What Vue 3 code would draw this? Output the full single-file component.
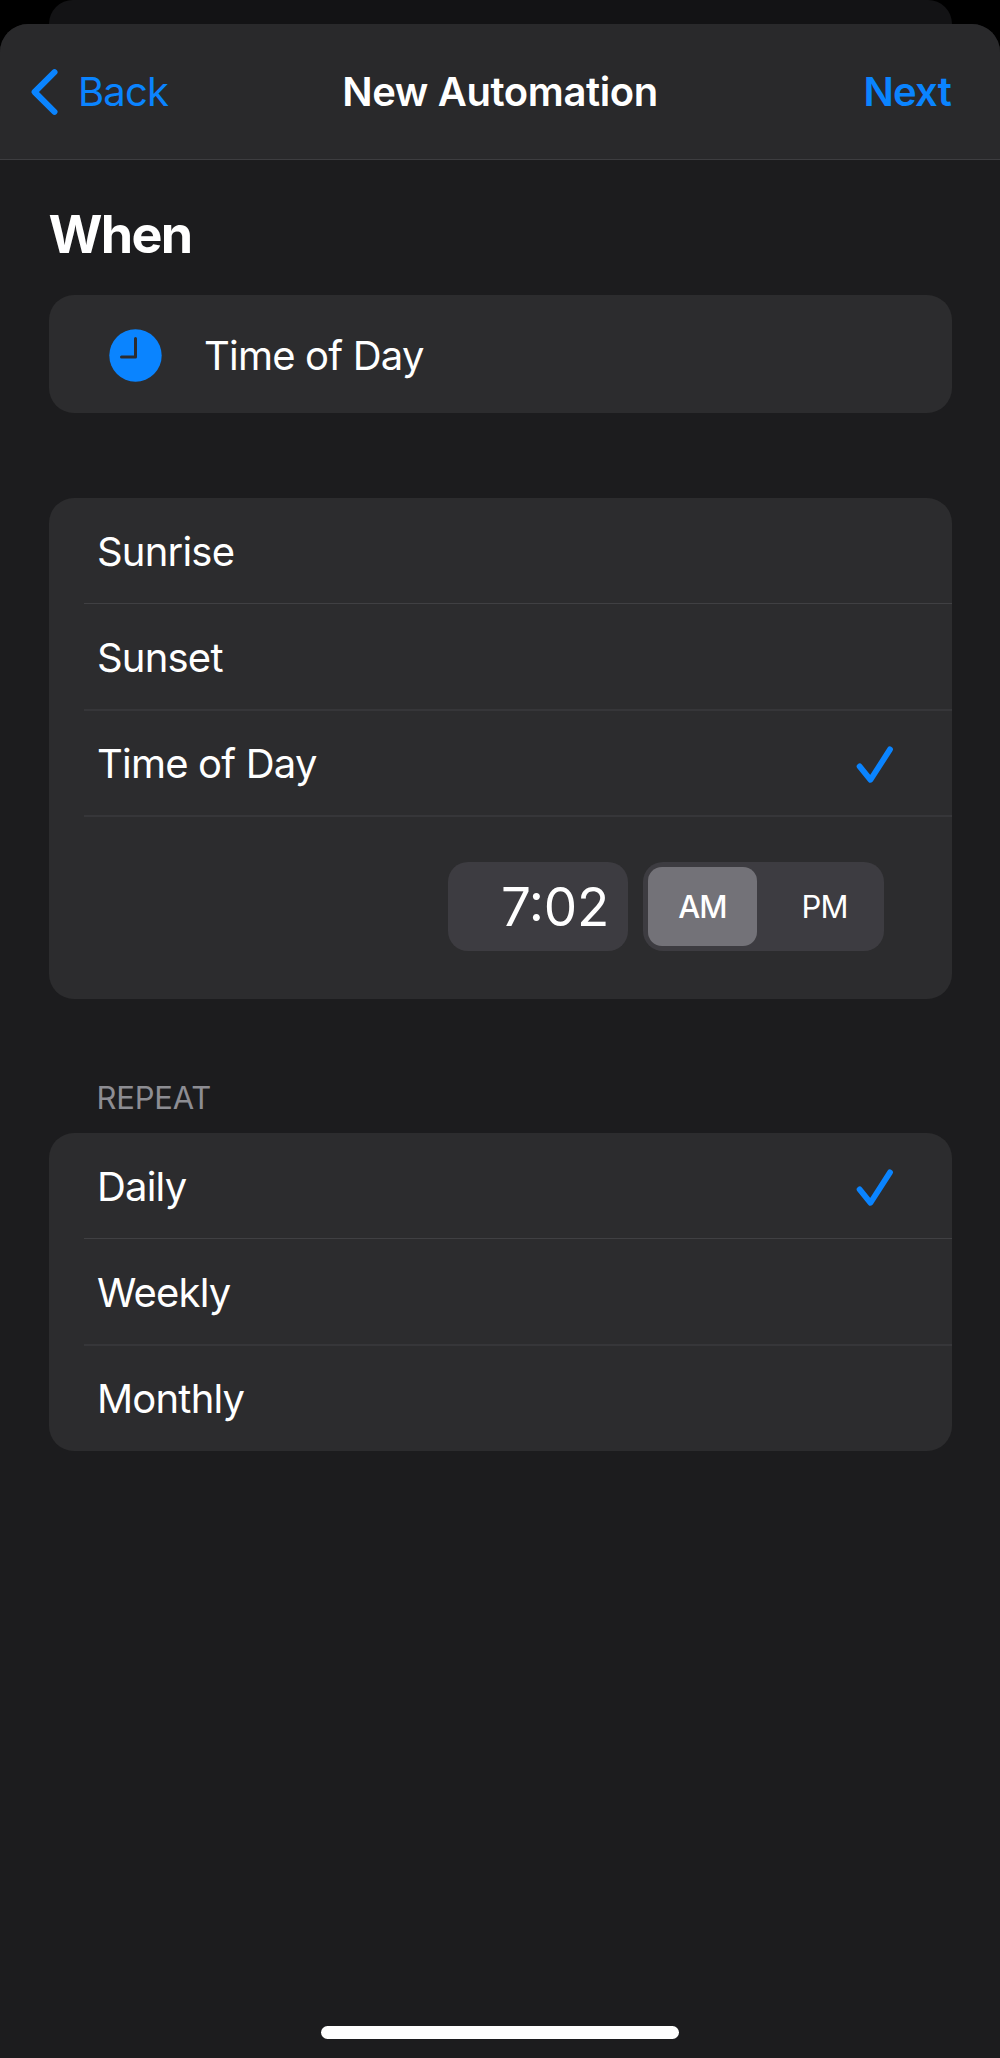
<template>
  <div class="screen">
    <div class="sheetBehind"></div>
    <div class="sheet">
      <header class="navbar">
        <button class="navButton back">
          <svg class="chevron" width="28" height="46" viewBox="0 0 28 46">
            <path d="M23.500 3.200 L3.600 23 L23.500 42.800" />
          </svg>
          <span>Back</span>
        </button>
        <h1 class="navTitle">New Automation</h1>
        <button class="navButton next">Next</button>
      </header>

      <main class="content">
        <h2 class="heading">When</h2>

        <section class="card trigger">
          <svg width="53" height="53" viewBox="0 0 53 53">
            <circle class="clockFace" cx="26.500" cy="26.500" r="26.200" />
            <path class="clockHands" d="M26.500 9.500 V28 H12.500" />
          </svg>
          <span class="triggerName">Time of Day</span>
        </section>

        <section class="card times">
          <div v-for="option in timeOptions" :key="option" class="row" @click="time = option">
            <span>{{ option }}</span>
            <svg v-if="option === time" class="check" width="38" height="38" viewBox="0 0 38 38">
              <path d="M3.600 21.400 L14.500 34.800 L34 4.400" />
            </svg>
          </div>
          <div class="picker">
            <div class="timeField">7:02</div>
            <div class="segments">
              <button
                v-for="p in ['AM', 'PM']"
                :key="p"
                class="segment"
                :class="{ active: p === period }"
                @click="period = p"
              >{{ p }}</button>
            </div>
          </div>
        </section>

        <h3 class="label">REPEAT</h3>
        <section class="card">
          <div v-for="option in repeatOptions" :key="option" class="row" @click="repeat = option">
            <span>{{ option }}</span>
            <svg v-if="option === repeat" class="check" width="38" height="38" viewBox="0 0 38 38">
              <path d="M3.600 21.400 L14.500 34.800 L34 4.400" />
            </svg>
          </div>
        </section>
      </main>

      <div class="homeIndicator"></div>
    </div>
  </div>
</template>

<script setup>
import { ref } from "vue";

const timeOptions = ["Sunrise", "Sunset", "Time of Day"]
const repeatOptions = ["Daily", "Weekly", "Monthly"]

const time = ref("Time of Day")
const period = ref("AM")
const repeat = ref("Daily")
</script>

<style>
body {
  background: #000;
}
</style>

<style scoped>
.screen {
  display: flex;
  flex-direction: column;
  width: 1000px;
  height: 2058px;
  background: #000;
  color: #fff;
  font-family: Inter, "Liberation Sans", sans-serif;
  font-size: 40px;
  letter-spacing: -0.8px;
}

button {
  border: none;
  padding: 0;
  background: transparent;
  color: inherit;
  font: inherit;
  letter-spacing: inherit;
}

h1, h2, h3 {
  margin: 0;
}

.sheetBehind {
  height: 24px;
  margin: 0 48.5px;
  border-radius: 24px 24px 0 0;
  background: #131315;
}

.sheet {
  flex: 1;
  display: flex;
  flex-direction: column;
  overflow: hidden;
  border-radius: 28px 28px 0 0;
  background: #1c1c1e;
}

.navbar {
  display: grid;
  grid-template-columns: 1fr auto 1fr;
  align-items: center;
  box-sizing: border-box;
  height: 136px;
  padding: 0 30px;
  border-bottom: 1px solid #3d3d40;
  background: #29292b;
}

.navButton {
  display: flex;
  align-items: center;
  color: #0a84ff;
}

.back {
  gap: 19px;
  padding-left: 1px;
}

.next {
  justify-self: end;
  padding-right: 19px;
  font-weight: 600;
}

.navTitle {
  font-size: 40px;
  font-weight: 600;
  letter-spacing: -0.4px;
}

.chevron path {
  fill: none;
  stroke: #0a84ff;
  stroke-width: 6;
  stroke-linecap: round;
  stroke-linejoin: round;
}

.content {
  flex: 1;
  padding: 0 48.5px;
}

.heading {
  padding-top: 45px;
  height: 90px;
  line-height: 60px;
  font-size: 52px;
  font-weight: 700;
  letter-spacing: -1.7px;
}

.card {
  overflow: hidden;
  border-radius: 25px;
  background: #2c2c2e;
}

.trigger {
  display: flex;
  align-items: center;
  gap: 42px;
  box-sizing: border-box;
  height: 118px;
  padding: 2px 0 0 60.5px;
}

.clockFace {
  fill: #0a84ff;
}

.clockHands {
  fill: none;
  stroke: #2c2c2e;
  stroke-width: 3;
  stroke-linecap: round;
  stroke-linejoin: round;
}

.times {
  height: 501px;
  margin-top: 85px;
}

.row {
  position: relative;
  display: flex;
  align-items: center;
  justify-content: space-between;
  box-sizing: border-box;
  height: 106px;
  padding: 1px 58px 0 48.5px;
}

/* separator starts a little left of the text */
.row::after {
  content: "";
  position: absolute;
  left: 35px;
  right: 0;
  bottom: 0;
  height: 1px;
  background: #404043;
}

.row:nth-child(n + 2)::after {
  bottom: -1px;
  height: 2px;
  background: #363639;
}

.row:last-child::after {
  display: none;
}

.check path {
  fill: none;
  stroke: #0a84ff;
  stroke-width: 5.8;
  stroke-linecap: round;
  stroke-linejoin: round;
}

.picker {
  display: flex;
  justify-content: flex-end;
  gap: 15px;
  padding: 46px 67.5px 0 0;
}

.timeField {
  box-sizing: border-box;
  width: 180px;
  height: 89px;
  padding-right: 19px;
  border-radius: 20px;
  background: #3d3c41;
  font-size: 53px;
  font-feature-settings: "case";
  letter-spacing: -0.3px;
  line-height: 90px;
  text-align: right;
}

.segments {
  display: flex;
  justify-content: space-between;
  box-sizing: border-box;
  width: 241px;
  height: 89px;
  padding: 5px;
  border-radius: 20px;
  background: #3d3c41;
}

.segment {
  width: 109px;
  border-radius: 14px;
  font-size: 31px;
  letter-spacing: -1px;
}

.segment.active {
  background: #737278;
  font-weight: 500;
}

.label {
  height: 62px;
  margin-top: 72px;
  padding-left: 48px;
  color: #8d8d93;
  font-size: 31px;
  font-weight: 400;
  letter-spacing: -0.2px;
  line-height: 54px;
}

.homeIndicator {
  width: 358px;
  height: 13px;
  margin: 0 auto 19px;
  border-radius: 7px;
  background: #fff;
}
</style>
